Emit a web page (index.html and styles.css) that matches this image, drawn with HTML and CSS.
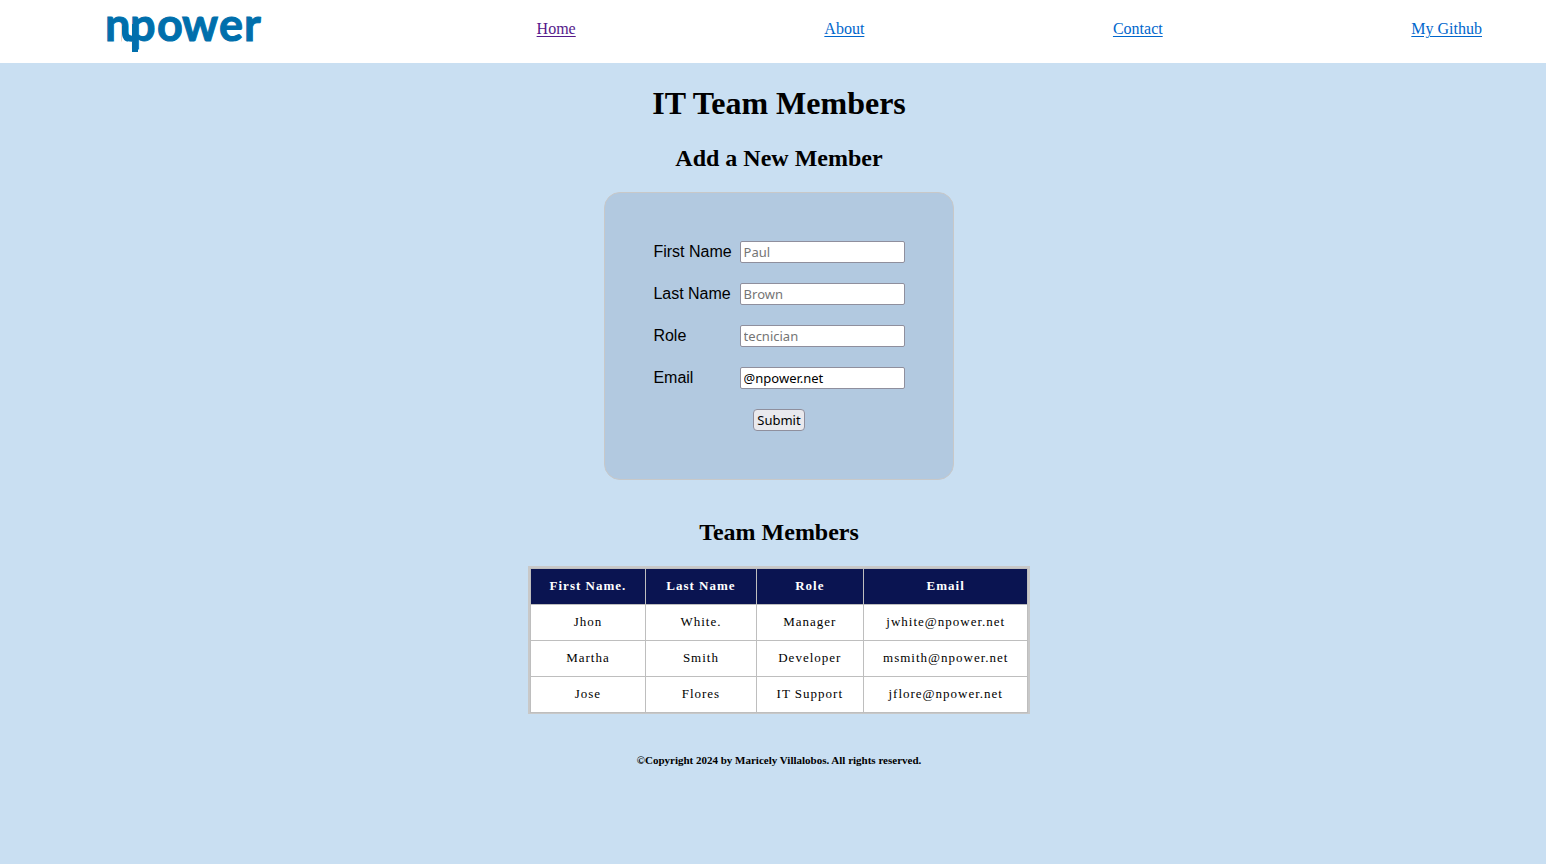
FILE: index.html
```html
<!DOCTYPE html>
<html lang="en">
<head>
<meta charset="utf-8">
<title>IT Team Members</title>
<link rel="stylesheet" href="styles.css">
</head>
<body>
<header>
<nav class="nav">
<svg class="logo" viewBox="0 0 208 63" role="img" aria-label="npower">
<text class="logo-text" x="25 50 77 102 139 164" y="41">npower</text>
<path class="logo-gap" d="M42 33Q42 42 51 43H42Z"/>
<path class="logo-link" d="M45 26V32Q45 39 55 39M55 24V52"/>
</svg>
<a class="visited" href="#home">Home</a>
<a href="#about">About</a>
<a href="#contact">Contact</a>
<a href="#github">My Github</a>
</nav>
</header>
<main>
<h1>IT Team Members</h1>
<h2>Add a New Member</h2>
<form class="member-form">
<div class="fields">
<label for="first">First Name</label><input id="first" type="text" placeholder="Paul">
<label for="last">Last Name</label><input id="last" type="text" placeholder="Brown">
<label for="role">Role</label><input id="role" type="text" placeholder="tecnician">
<label for="email">Email</label><input id="email" type="text" value="@npower.net">
</div>
<button type="submit">Submit</button>
</form>
<h2>Team Members</h2>
<div class="table-frame">
<table>
<thead><tr><th>First Name.</th><th>Last Name</th><th>Role</th><th>Email</th></tr></thead>
<tbody>
<tr><td>Jhon</td><td>White.</td><td>Manager</td><td>jwhite@npower.net</td></tr>
<tr><td>Martha</td><td>Smith</td><td>Developer</td><td>msmith@npower.net</td></tr>
<tr><td>Jose</td><td>Flores</td><td>IT Support</td><td>jflore@npower.net</td></tr>
</tbody>
</table>
</div>
</main>
<footer>©Copyright 2024 by Maricely Villalobos. All rights reserved.</footer>
</body>
</html>
```
FILE: styles.css
```css
* { box-sizing: border-box; }
body {
  margin: 0;
  background: #c9dff2;
  color: #000;
  font-family: "Liberation Serif", "Times New Roman", serif;
  font-size: 16px;
}
.nav {
  display: flex;
  justify-content: space-between;
  align-items: flex-start;
  height: 63px;
  padding: 0 64px 0 80px;
  background: #fff;
}
.nav a { color: #0066cc; margin-top: 20px; line-height: 18px; text-underline-offset: 2px; }
.nav a.visited { color: #551a8b; }
.logo { width: 208px; height: 63px; overflow: visible; }
.logo-text {
  font-family: Lato, sans-serif;
  font-weight: 700;
  font-size: 45px;
  fill: #006fac;
  stroke: #006fac;
  stroke-width: 1;
}
.logo-gap { fill: #fff; }
.logo-link { fill: none; stroke: #006fac; stroke-width: 6; }
main {
  display: flex;
  flex-direction: column;
  align-items: center;
  padding-left: 12px;
}
h1 { margin: 22px 0; font-size: 32px; line-height: 37px; }
h2 { margin: 0 0 20px; font-size: 24px; line-height: 28px; }
.member-form {
  display: flex;
  flex-direction: column;
  align-items: center;
  gap: 20px;
  margin-bottom: 38px;
  padding: 48px;
  border: 1px solid #c8c8c8;
  border-radius: 16px;
  background: #b2c9e0;
}
.fields {
  display: grid;
  grid-template-columns: auto 165px;
  gap: 20px 8px;
}
label { font-family: "Liberation Sans", Arial, sans-serif; line-height: 22px; }
input, button {
  height: 22px;
  border: 1px solid #8f8f9d;
  font-family: "Noto Sans", sans-serif;
  font-size: 13px;
  color: #000;
}
input { width: 165px; padding: 0 3px; border-radius: 2px; background: #fff; }
input::placeholder { color: #757575; }
button { padding: 0 3px; border-radius: 4px; background: #e9e9ed; line-height: 20px; }
.table-frame { border: solid #c8c8c8; border-width: 2px 2px 1px; }
table {
  border-collapse: collapse;
  background: #fff;
  font-size: 13px;
  letter-spacing: 1px;
  text-align: center;
}
th, td { padding: 9px 20px 11px; border: 1px solid #bebebe; line-height: 15px; }
th { background: #0a1451; color: #fff; }
th:first-child, td:first-child, th:last-child, td:last-child { padding-left: 19px; padding-right: 19px; }
footer {
  margin-top: 40px;
  padding-left: 12px;
  font-size: 11px;
  font-weight: 700;
  line-height: 12px;
  text-align: center;
}
```
